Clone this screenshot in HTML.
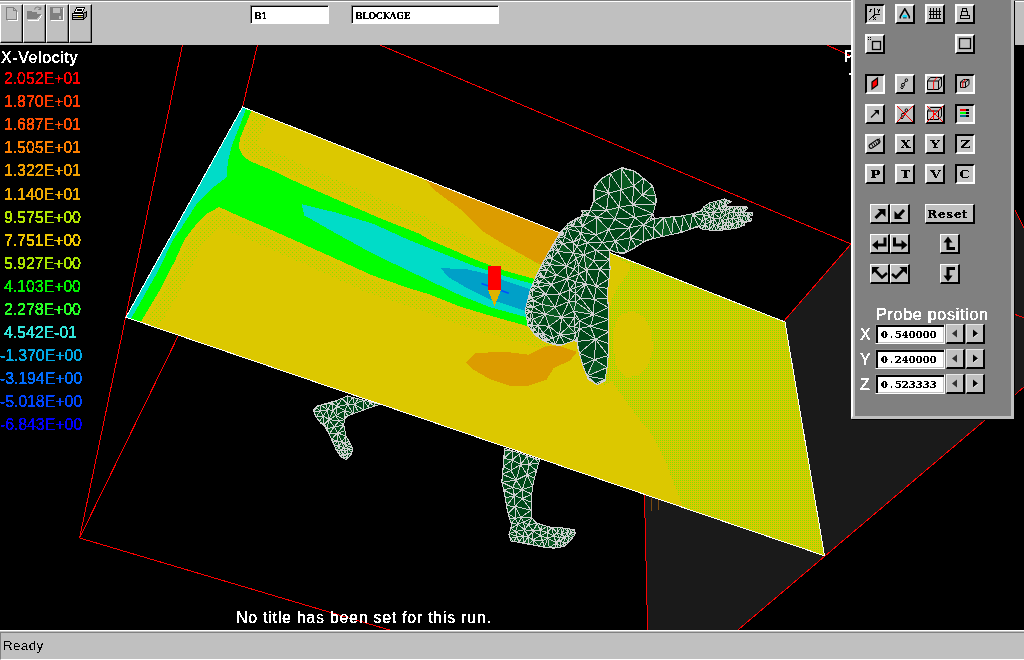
<!DOCTYPE html>
<html lang="en">
<head>
<meta charset="utf-8">
<title>X-Velocity viewer</title>
<style>
*{box-sizing:border-box;margin:0;padding:0}
html,body{width:1024px;height:660px;overflow:hidden;background:#000;font-family:"Liberation Sans",sans-serif}
#app{position:relative;width:1024px;height:660px;overflow:hidden;background:#000}
.scene{position:absolute;left:0;top:0}
.g{display:inline-block;will-change:transform;filter:url(#thr)}
#toolbar{position:absolute;left:0;top:0;width:1024px;height:45px;background:#c0c0c0;border-top:1px solid #808080}
#toolbar:before{content:"";position:absolute;left:0;top:0;width:1024px;height:1px;background:#fff}
.tbtn{position:absolute;top:3px;width:23px;height:39px;background:#c0c0c0;border-left:1px solid #fff;border-top:1px solid #fff;border-right:1px solid #000;border-bottom:1px solid #000;box-shadow:inset -1px -1px 0 #808080}
.tbtn svg{position:absolute;left:-1px;top:-2px}
.tfield{position:absolute;top:4px;height:19px;background:#fff;border-top:1px solid #808080;border-left:1px solid #808080;border-right:1px solid #fff;border-bottom:1px solid #fff;box-shadow:inset 1px 1px 0 #000;font:bold 10px "DejaVu Serif","Liberation Serif",serif;font-stretch:condensed;letter-spacing:-0.35px;-webkit-text-stroke:0.2px #000;color:#000;line-height:19.5px;padding-left:3px;white-space:nowrap}
.leg{position:absolute;left:0;white-space:nowrap;font-size:16px;line-height:18px;letter-spacing:0;-webkit-text-stroke:0.3px currentColor}
#overlay{position:absolute;left:0;top:0;width:1024px;height:660px;will-change:transform;filter:url(#thr)}
#status{position:absolute;left:0;top:630px;width:1024px;height:30px;background:#c0c0c0;border-top:1px solid #fff}
#status .inner{position:absolute;left:0;top:1px;width:1024px;height:28px;border-top:1px solid #808080;border-left:1px solid #808080;border-bottom:1px solid #fff;font-size:13.5px;letter-spacing:0.3px;line-height:26px;padding-left:2px;color:#000}
#panel{position:absolute;left:851px;top:0;width:163px;height:419px;background:#808080;border-left:2px solid #fff;border-right:3px solid #c0c0c0;border-bottom:3px solid #c0c0c0;box-shadow:inset 2px 0 0 #c0c0c0,1px 1px 0 #000}
.pb{position:absolute;width:20px;height:20px;background:#c0c0c0;border:2px solid;border-color:#fff #000 #000 #fff}
.pb.in{border-color:#000 #fff #fff #000}
.pb svg{position:absolute;left:0;top:0;width:16px;height:16px;overflow:visible}
.pb b{position:absolute;left:-2px;top:0;width:20px;height:16px;text-align:center;font:bold 11.5px "DejaVu Serif","Liberation Serif",serif;line-height:16px;color:#000}
.pb b .g{transform:scaleX(1.18)}
.rs .g{transform:scaleX(1.1)}
.sb{position:absolute;width:20px;height:20px;background:#c0c0c0;border:solid;border-width:1px 2px 2px 1px;border-color:#fff #000 #000 #fff}
.sb svg{position:absolute;left:0;top:0;width:18px;height:18px;overflow:visible}
.ab{position:absolute;width:19px;height:20px;background:#c0c0c0;border:solid;border-width:1px 2px 2px 1px;border-color:#e8e8e8 #000 #000 #e8e8e8}
.ab svg{position:absolute;left:0;top:0;width:16px;height:17px;overflow:visible}
.rs{font:bold 11px "DejaVu Serif","Liberation Serif",serif;letter-spacing:0.6px;-webkit-text-stroke:0.2px #000;padding-right:3px;line-height:19px;text-align:center;color:#000}
.ptxt{position:absolute;color:#fff;font-size:16px;line-height:18px;white-space:nowrap;will-change:transform;-webkit-text-stroke:0.3px #fff;filter:url(#thr)}
.pf{position:absolute;width:70px;height:20px;background:#fff;border:1px solid;border-color:#909090 #fff #fff #909090;box-shadow:inset 2px 2px 0 #000,inset -1px -1px 0 #c0c0c0;font:bold 10px "DejaVu Serif","Liberation Serif",serif;line-height:20px;padding-left:5px;color:#000;white-space:nowrap;-webkit-text-stroke:0.2px #000}
.pf i{display:inline-block;width:6.9px;text-align:center;font-style:normal}
</style>
</head>
<body>
<div id="app">
<svg width="0" height="0" style="position:absolute"><defs><filter id="thr" x="0" y="0" width="100%" height="100%" color-interpolation-filters="sRGB"><feComponentTransfer><feFuncA type="discrete" tableValues="0 1"/></feComponentTransfer></filter></defs></svg>
<svg class="scene" width="1024" height="660" viewBox="0 0 1024 660" shape-rendering="crispEdges">
<rect x="0" y="0" width="1024" height="660" fill="#000"/>
<polygon points="784.0,321.0 851.0,244.0 1000.0,180.0 1014.0,209.0 1024.0,228.0 1024.0,387.0 737.9,630.0 647.6,630.0 644.5,495.5 700.0,400.0" fill="#1a1a1a"/>
<g stroke="#ff0000" stroke-width="1" fill="none">
<line x1="182.5" y1="45" x2="79.6" y2="538"/>
<line x1="257.5" y1="45" x2="242.5" y2="107"/>
<line x1="79.6" y1="538" x2="203" y2="285"/>
<line x1="79.6" y1="538" x2="389.6" y2="630"/>
<line x1="380" y1="45" x2="851" y2="244"/>
<line x1="851" y1="244" x2="784" y2="321"/>
<line x1="827" y1="45" x2="851" y2="56.2"/>
<line x1="1014.5" y1="209" x2="1024" y2="228"/>
<line x1="1000" y1="309.1" x2="1024" y2="317.7"/>
<line x1="737.9" y1="630" x2="1024" y2="387"/>
<line x1="644.5" y1="495.5" x2="647.6" y2="630"/>
</g>
<path d="M651.5 498V511M658.5 500V510" stroke="#7a4a10" stroke-width="1"/>
<polygon points="347.5,396.0 379.7,404.3 366.9,408.8 354.0,413.4 345.0,417.2 343.7,425.0 346.2,436.5 350.0,443.0 352.7,448.0 351.4,454.6 346.2,459.7 341.0,457.0 336.0,449.4 330.8,437.8 325.6,426.0 320.5,423.0 314.7,414.6 313.4,409.5 317.9,405.6 330.8,403.0 338.5,399.8" fill="#004818" stroke="#d8d8d8" stroke-width="1"/>
<path d="M335.8 415.7L328.9 419.6L333.0 410.3ZM336.8 400.5L331.7 402.6L326.2 403.9ZM334.3 426.7L329.2 434.2L326.9 429.1ZM358.3 398.8L363.8 400.2L354.3 404.1ZM337.0 450.9L335.4 448.1L339.4 445.6ZM343.6 454.4L344.9 451.2L346.9 454.0ZM358.3 398.8L369.2 401.6L363.8 400.2ZM374.6 403.0L369.2 401.6L347.5 396.0Z" fill="#0a5a22"/>
<path d="M347.5 396.0L352.9 397.4M347.5 396.0L369.2 401.6M347.5 396.0L374.6 403.0M347.5 396.0L347.2 396.1M347.5 396.0L347.7 404.5M352.9 397.4L358.3 398.8M352.9 397.4L369.2 401.6M352.9 397.4L354.3 404.1M352.9 397.4L347.7 404.5M358.3 398.8L363.8 400.2M358.3 398.8L369.2 401.6M358.3 398.8L354.3 404.1M363.8 400.2L369.2 401.6M363.8 400.2L368.8 408.1M363.8 400.2L363.5 410.0M363.8 400.2L354.3 404.1M369.2 401.6L374.6 403.0M369.2 401.6L374.1 406.3M369.2 401.6L368.8 408.1M374.6 403.0L379.4 404.4M374.6 403.0L374.1 406.3M379.4 404.4L374.1 406.3M374.1 406.3L368.8 408.1M368.8 408.1L363.5 410.0M363.5 410.0L358.3 411.9M363.5 410.0L354.3 404.1M358.3 411.9L353.0 413.8M358.3 411.9L354.3 404.1M353.0 413.8L347.8 416.0M353.0 413.8L354.3 404.1M353.0 413.8L344.7 410.4M353.0 413.8L347.7 404.5M347.8 416.0L344.6 419.7M347.8 416.0L344.7 410.4M344.6 419.7L343.7 425.2M344.6 419.7L335.8 415.7M344.6 419.7L344.7 410.4M344.6 419.7L339.0 421.0M343.7 425.2L344.9 430.7M343.7 425.2L334.3 426.7M343.7 425.2L337.7 432.9M343.7 425.2L339.0 421.0M344.9 430.7L346.1 436.1M344.9 430.7L337.7 432.9M346.1 436.1L348.8 441.0M346.1 436.1L337.7 432.9M346.1 436.1L345.8 442.5M346.1 436.1L341.7 441.7M348.8 441.0L350.4 443.8M348.8 441.0L345.8 442.5M350.4 443.8L352.0 446.6M350.4 443.8L345.8 442.5M350.4 443.8L346.4 445.8M352.0 446.6L352.4 449.6M352.0 446.6L348.0 449.4M352.0 446.6L346.4 445.8M352.4 449.6L351.8 452.7M352.4 449.6L348.0 449.4M351.8 452.7L350.5 455.5M351.8 452.7L346.9 454.0M351.8 452.7L348.0 449.4M350.5 455.5L348.2 457.8M350.5 455.5L346.9 454.0M348.2 457.8L345.8 459.5M348.2 457.8L343.0 458.0M348.2 457.8L343.6 454.4M348.2 457.8L346.9 454.0M345.8 459.5L343.0 458.0M343.0 458.0L340.5 456.2M343.0 458.0L343.6 454.4M340.5 456.2L338.7 453.5M340.5 456.2L343.6 454.4M338.7 453.5L337.0 450.9M338.7 453.5L343.6 454.4M338.7 453.5L340.4 450.5M337.0 450.9L335.4 448.1M337.0 450.9L339.4 445.6M337.0 450.9L340.4 450.5M335.4 448.1L334.1 445.1M335.4 448.1L339.4 445.6M334.1 445.1L332.8 442.2M334.1 445.1L337.5 440.9M334.1 445.1L339.4 445.6M332.8 442.2L331.5 439.3M332.8 442.2L337.5 440.9M331.5 439.3L329.2 434.2M331.5 439.3L337.7 432.9M331.5 439.3L337.5 440.9M329.2 434.2L326.9 429.1M329.2 434.2L323.7 424.9M329.2 434.2L334.3 426.7M329.2 434.2L337.7 432.9M326.9 429.1L323.7 424.9M326.9 429.1L334.3 426.7M326.9 429.1L328.9 419.6M323.7 424.9L319.4 421.4M323.7 424.9L328.9 419.6M323.7 424.9L323.3 416.0M319.4 421.4L316.2 416.8M319.4 421.4L323.3 416.0M316.2 416.8L314.0 411.8M316.2 416.8L323.3 416.0M316.2 416.8L320.3 411.2M314.0 411.8L315.9 407.4M314.0 411.8L320.3 411.2M315.9 407.4L320.8 405.0M315.9 407.4L320.3 411.2M320.8 405.0L326.2 403.9M320.8 405.0L336.8 400.5M320.8 405.0L327.3 409.7M320.8 405.0L320.3 411.2M326.2 403.9L331.7 402.6M326.2 403.9L336.8 400.5M326.2 403.9L327.3 409.7M331.7 402.6L336.8 400.5M331.7 402.6L327.3 409.7M331.7 402.6L337.3 406.6M331.7 402.6L333.0 410.3M336.8 400.5L342.0 398.3M336.8 400.5L337.3 406.6M342.0 398.3L347.2 396.1M342.0 398.3L337.3 406.6M342.0 398.3L347.7 404.5M347.2 396.1L347.7 404.5M354.3 404.1L347.7 404.5M327.3 409.7L328.9 419.6M327.3 409.7L323.3 416.0M327.3 409.7L320.3 411.2M327.3 409.7L333.0 410.3M337.3 406.6L335.8 415.7M337.3 406.6L344.7 410.4M337.3 406.6L347.7 404.5M337.3 406.6L333.0 410.3M335.8 415.7L344.7 410.4M335.8 415.7L339.0 421.0M335.8 415.7L328.9 419.6M335.8 415.7L333.0 410.3M334.3 426.7L337.7 432.9M334.3 426.7L339.0 421.0M334.3 426.7L328.9 419.6M337.7 432.9L337.5 440.9M337.7 432.9L341.7 441.7M345.8 442.5L341.7 441.7M345.8 442.5L346.4 445.8M337.5 440.9L339.4 445.6M337.5 440.9L341.7 441.7M344.1 448.0L339.4 445.6M344.1 448.0L348.0 449.4M344.1 448.0L344.9 451.2M344.1 448.0L341.7 441.7M344.1 448.0L340.4 450.5M344.1 448.0L346.4 445.8M344.7 410.4L347.7 404.5M343.6 454.4L346.9 454.0M343.6 454.4L344.9 451.2M343.6 454.4L340.4 450.5M339.0 421.0L328.9 419.6M346.9 454.0L348.0 449.4M346.9 454.0L344.9 451.2M328.9 419.6L323.3 416.0M328.9 419.6L333.0 410.3M339.4 445.6L341.7 441.7M339.4 445.6L340.4 450.5M348.0 449.4L344.9 451.2M348.0 449.4L346.4 445.8M323.3 416.0L320.3 411.2M344.9 451.2L340.4 450.5M341.7 441.7L346.4 445.8" stroke="#d0d0d0" stroke-width="1" fill="none"/>
<polygon points="504.5,448.2 539.5,460.0 536.4,471.0 532.7,485.5 531.0,501.8 531.0,516.4 535.5,522.7 550.0,527.3 566.4,528.2 574.5,530.0 575.5,533.6 571.0,540.0 564.5,546.4 553.6,548.2 544.5,547.3 526.4,543.6 511.0,541.0 509.0,534.5 511.8,525.5 507.3,511.0 505.5,498.0 501.8,481.8 503.6,463.6" fill="#004818" stroke="#d8d8d8" stroke-width="1"/>
<path d="M527.2 455.9L528.9 464.5L520.6 464.5ZM503.9 458.4L512.4 460.0L503.3 466.4ZM512.1 450.8L503.9 458.4L504.4 450.4ZM527.1 474.7L534.5 478.4L532.6 486.2ZM572.8 537.4L570.2 533.6L574.7 534.8ZM506.6 505.8L505.5 497.9L514.5 495.5ZM547.8 538.2L556.6 542.7L549.3 547.8ZM506.6 505.8L503.7 490.1L505.5 497.9ZM522.3 489.7L512.6 487.5L516.2 480.1ZM528.9 544.1L523.8 543.2L528.2 536.6ZM540.3 530.5L533.1 530.9L537.3 523.3ZM542.6 540.9L540.5 535.7L547.8 538.2ZM524.5 529.8L523.7 522.1L528.4 524.7ZM568.7 542.3L568.0 536.6L571.0 540.0ZM568.0 536.6L570.2 533.6L572.8 537.4ZM532.8 540.0L528.9 544.1L528.2 536.6ZM515.1 518.3L511.2 523.6L509.7 518.6Z" fill="#0a5a22"/>
<path d="M504.5 448.2L512.1 450.8M504.5 448.2L534.8 458.4M504.5 448.2L501.9 482.3M504.5 448.2L502.5 474.3M504.5 448.2L504.4 450.4M512.1 450.8L519.7 453.3M512.1 450.8L534.8 458.4M512.1 450.8L503.9 458.4M512.1 450.8L504.4 450.4M512.1 450.8L512.4 460.0M519.7 453.3L527.2 455.9M519.7 453.3L534.8 458.4M519.7 453.3L512.4 460.0M519.7 453.3L520.6 464.5M527.2 455.9L534.8 458.4M527.2 455.9L520.6 464.5M527.2 455.9L528.9 464.5M534.8 458.4L538.7 462.9M534.8 458.4L528.9 464.5M538.7 462.9L536.5 470.6M538.7 462.9L528.9 464.5M536.5 470.6L534.5 478.4M536.5 470.6L527.1 474.7M536.5 470.6L528.9 464.5M534.5 478.4L532.6 486.2M534.5 478.4L527.1 474.7M532.6 486.2L531.8 494.1M532.6 486.2L522.3 489.7M532.6 486.2L527.1 474.7M531.8 494.1L531.0 502.1M531.8 494.1L522.3 489.7M531.8 494.1L522.2 498.5M531.0 502.1L531.0 510.1M531.0 502.1L522.2 498.5M531.0 510.1L532.0 517.8M531.0 510.1L515.1 506.4M531.0 510.1L520.9 517.5M531.0 510.1L522.2 498.5M532.0 517.8L537.3 523.3M532.0 517.8L520.9 517.5M532.0 517.8L523.7 522.1M532.0 517.8L528.4 524.7M537.3 523.3L542.3 524.9M537.3 523.3L533.1 530.9M537.3 523.3L528.4 524.7M537.3 523.3L540.3 530.5M542.3 524.9L547.3 526.4M542.3 524.9L540.3 530.5M547.3 526.4L552.3 527.4M547.3 526.4L540.3 530.5M547.3 526.4L547.1 532.2M552.3 527.4L557.5 527.7M552.3 527.4L553.3 535.9M552.3 527.4L556.9 532.9M552.3 527.4L547.1 532.2M557.5 527.7L560.7 527.9M557.5 527.7L556.9 532.9M560.7 527.9L563.9 528.1M560.7 527.9L562.2 534.6M560.7 527.9L556.9 532.9M563.9 528.1L567.1 528.4M563.9 528.1L562.2 534.6M563.9 528.1L567.6 531.8M567.1 528.4L570.2 529.0M567.1 528.4L567.6 531.8M570.2 529.0L573.3 529.7M570.2 529.0L570.2 533.6M570.2 529.0L567.6 531.8M573.3 529.7L575.0 531.9M573.3 529.7L570.2 533.6M575.0 531.9L574.7 534.8M575.0 531.9L570.2 533.6M574.7 534.8L572.8 537.4M574.7 534.8L570.2 533.6M572.8 537.4L571.0 540.0M572.8 537.4L568.0 536.6M572.8 537.4L570.2 533.6M571.0 540.0L568.7 542.3M571.0 540.0L568.0 536.6M568.7 542.3L566.4 544.5M568.7 542.3L563.7 542.7M568.7 542.3L568.0 536.6M568.7 542.3L564.6 537.3M566.4 544.5L564.0 546.5M566.4 544.5L563.7 542.7M564.0 546.5L560.8 547.0M564.0 546.5L563.7 542.7M560.8 547.0L557.7 547.5M560.8 547.0L563.7 542.7M560.8 547.0L559.9 541.3M560.8 547.0L556.6 542.7M557.7 547.5L554.5 548.0M557.7 547.5L556.6 542.7M554.5 548.0L549.3 547.8M554.5 548.0L556.6 542.7M549.3 547.8L544.2 547.2M549.3 547.8L547.8 538.2M549.3 547.8L556.6 542.7M544.2 547.2L539.1 546.2M544.2 547.2L513.5 541.4M544.2 547.2L547.8 538.2M544.2 547.2L542.6 540.9M539.1 546.2L534.0 545.2M539.1 546.2L518.7 542.3M539.1 546.2L513.5 541.4M539.1 546.2L532.8 540.0M539.1 546.2L542.6 540.9M534.0 545.2L528.9 544.1M534.0 545.2L523.8 543.2M534.0 545.2L518.7 542.3M534.0 545.2L532.8 540.0M528.9 544.1L523.8 543.2M528.9 544.1L528.2 536.6M528.9 544.1L532.8 540.0M523.8 543.2L518.7 542.3M523.8 543.2L528.2 536.6M523.8 543.2L523.0 536.3M518.7 542.3L513.5 541.4M518.7 542.3L517.3 536.6M518.7 542.3L523.0 536.3M513.5 541.4L510.2 538.5M513.5 541.4L517.3 536.6M510.2 538.5L509.3 533.5M510.2 538.5L517.3 536.6M509.3 533.5L510.9 528.5M509.3 533.5L515.5 531.4M509.3 533.5L517.3 536.6M510.9 528.5L511.2 523.6M510.9 528.5L518.1 524.2M510.9 528.5L515.5 531.4M511.2 523.6L509.7 518.6M511.2 523.6L518.1 524.2M511.2 523.6L515.1 518.3M509.7 518.6L508.1 513.6M509.7 518.6L515.1 518.3M508.1 513.6L506.6 505.8M508.1 513.6L515.1 506.4M508.1 513.6L515.1 518.3M506.6 505.8L505.5 497.9M506.6 505.8L503.7 490.1M506.6 505.8L515.1 506.4M506.6 505.8L514.5 495.5M505.5 497.9L503.7 490.1M505.5 497.9L514.5 495.5M503.7 490.1L501.9 482.3M503.7 490.1L514.5 495.5M503.7 490.1L512.6 487.5M501.9 482.3L502.5 474.3M501.9 482.3L516.2 480.1M501.9 482.3L512.6 487.5M502.5 474.3L503.3 466.4M502.5 474.3L503.9 458.4M502.5 474.3L504.4 450.4M502.5 474.3L510.9 470.5M502.5 474.3L516.2 480.1M503.3 466.4L503.9 458.4M503.3 466.4L510.9 470.5M503.3 466.4L512.4 460.0M503.9 458.4L504.4 450.4M503.9 458.4L512.4 460.0M533.1 530.9L524.5 529.8M533.1 530.9L540.5 535.7M533.1 530.9L528.2 536.6M533.1 530.9L532.8 540.0M533.1 530.9L528.4 524.7M533.1 530.9L540.3 530.5M510.9 470.5L512.4 460.0M510.9 470.5L516.2 480.1M510.9 470.5L520.6 464.5M512.4 460.0L520.6 464.5M524.5 529.8L528.2 536.6M524.5 529.8L523.7 522.1M524.5 529.8L518.1 524.2M524.5 529.8L528.4 524.7M524.5 529.8L515.5 531.4M524.5 529.8L523.0 536.3M515.1 506.4L520.9 517.5M515.1 506.4L514.5 495.5M515.1 506.4L515.1 518.3M515.1 506.4L522.2 498.5M540.5 535.7L547.8 538.2M540.5 535.7L532.8 540.0M540.5 535.7L542.6 540.9M540.5 535.7L540.3 530.5M540.5 535.7L547.1 532.2M563.7 542.7L559.9 541.3M563.7 542.7L564.6 537.3M562.2 534.6L559.6 537.9M562.2 534.6L556.9 532.9M562.2 534.6L564.6 537.3M562.2 534.6L567.6 531.8M522.3 489.7L527.1 474.7M522.3 489.7L514.5 495.5M522.3 489.7L516.2 480.1M522.3 489.7L512.6 487.5M522.3 489.7L522.2 498.5M528.2 536.6L532.8 540.0M528.2 536.6L523.0 536.3M527.1 474.7L516.2 480.1M527.1 474.7L520.6 464.5M527.1 474.7L528.9 464.5M520.9 517.5L523.7 522.1M520.9 517.5L518.1 524.2M520.9 517.5L515.1 518.3M547.8 538.2L553.3 535.9M547.8 538.2L542.6 540.9M547.8 538.2L556.6 542.7M547.8 538.2L547.1 532.2M532.8 540.0L542.6 540.9M514.5 495.5L512.6 487.5M514.5 495.5L522.2 498.5M553.3 535.9L559.6 537.9M553.3 535.9L556.9 532.9M553.3 535.9L556.6 542.7M553.3 535.9L547.1 532.2M559.6 537.9L556.9 532.9M559.6 537.9L559.9 541.3M559.6 537.9L556.6 542.7M559.6 537.9L564.6 537.3M516.2 480.1L520.6 464.5M516.2 480.1L512.6 487.5M520.6 464.5L528.9 464.5M523.7 522.1L518.1 524.2M523.7 522.1L528.4 524.7M518.1 524.2L515.1 518.3M518.1 524.2L515.5 531.4M568.0 536.6L570.2 533.6M568.0 536.6L564.6 537.3M568.0 536.6L567.6 531.8M559.9 541.3L556.6 542.7M559.9 541.3L564.6 537.3M570.2 533.6L567.6 531.8M515.5 531.4L517.3 536.6M515.5 531.4L523.0 536.3M540.3 530.5L547.1 532.2M517.3 536.6L523.0 536.3M564.6 537.3L567.6 531.8" stroke="#d0d0d0" stroke-width="1" fill="none"/>
<defs><clipPath id="pc"><polygon points="242.5,107.0 785.0,322.0 824.5,555.8 125.9,317.3"/></clipPath>
<pattern id="dith2" width="2" height="2" patternUnits="userSpaceOnUse"><rect width="2" height="2" fill="#dcc800"/><rect x="0" y="0" width="1" height="1" fill="#82e000"/></pattern>
<pattern id="dith" width="2" height="2" patternUnits="userSpaceOnUse"><rect width="2" height="2" fill="#dcc800"/><rect width="1" height="1" fill="#b4e000"/><rect x="1" y="1" width="1" height="1" fill="#b4e000"/></pattern>
<pattern id="dots" width="4" height="4" patternUnits="userSpaceOnUse"><rect x="0" y="0" width="1" height="1" fill="#82e000"/><rect x="2" y="2" width="1" height="1" fill="#a0d800"/></pattern>
</defs>
<g clip-path="url(#pc)">
<polygon points="242.5,107.0 785.0,322.0 824.5,555.8 125.9,317.3" fill="#dcc800"/>
<polygon points="605.0,250.0 785.0,322.0 824.5,555.8 683.0,507.5 665.0,460.0 650.8,433.0 640.0,420.0 625.0,400.0 612.0,381.0 605.0,385.0 600.0,383.0 600.0,260.0" fill="url(#dith2)"/>
<polygon points="622.0,314.0 634.0,311.0 645.0,318.0 652.0,333.0 653.0,350.0 648.0,365.0 638.0,376.0 626.0,377.0 617.0,368.0 614.0,350.0 614.0,330.0 617.0,320.0" fill="#dcc800"/>
<polygon points="604.0,250.0 631.0,265.4 626.0,276.0 617.0,288.0 611.0,302.0 608.5,318.0 600.0,318.0" fill="#dcc800"/>
<polygon points="425.5,180.0 435.5,191.0 460.0,209.0 481.0,230.0 496.7,240.0 514.8,250.6 539.0,264.0 560.0,272.0 600.0,265.0 600.0,249.0" fill="#dc9c00"/>
<polygon points="466.0,362.0 476.0,353.0 505.5,351.8 529.0,354.7 546.5,346.0 559.7,346.0 577.0,351.8 570.0,360.6 553.8,368.0 546.5,379.6 529.0,385.5 511.0,386.0 490.8,379.6 473.0,369.4" fill="#dc9c00"/>
<polygon points="251.4,110.8 246.3,123.2 239.8,138.7 239.0,147.7 242.4,155.4 248.9,160.6 274.6,171.5 300.0,183.6 340.0,200.9 380.0,218.2 420.0,234.0 430.0,240.0 475.5,259.7 505.8,271.0 533.0,278.6 545.0,282.0 540.0,330.0 528.5,326.4 490.6,315.8 460.3,306.7 430.0,294.5 409.0,288.2 372.7,275.5 336.4,259.0 300.0,242.7 274.6,231.4 236.0,214.7 219.2,207.0 207.6,213.4 194.7,226.3 184.2,240.0 175.4,259.8 160.0,290.0 141.0,321.5 125.9,317.3 242.5,107.0" fill="none" stroke="url(#dots)" stroke-width="36" stroke-linejoin="round"/>
<polygon points="251.4,110.8 246.3,123.2 239.8,138.7 239.0,147.7 242.4,155.4 248.9,160.6 274.6,171.5 300.0,183.6 340.0,200.9 380.0,218.2 420.0,234.0 430.0,240.0 475.5,259.7 505.8,271.0 533.0,278.6 545.0,282.0 540.0,330.0 528.5,326.4 490.6,315.8 460.3,306.7 430.0,294.5 409.0,288.2 372.7,275.5 336.4,259.0 300.0,242.7 274.6,231.4 236.0,214.7 219.2,207.0 207.6,213.4 194.7,226.3 184.2,240.0 175.4,259.8 160.0,290.0 141.0,321.5 125.9,317.3 242.5,107.0" fill="none" stroke="#dcc800" stroke-width="8" stroke-linejoin="round"/>
<polygon points="251.4,110.8 246.3,123.2 239.8,138.7 239.0,147.7 242.4,155.4 248.9,160.6 274.6,171.5 300.0,183.6 340.0,200.9 380.0,218.2 420.0,234.0 430.0,240.0 475.5,259.7 505.8,271.0 533.0,278.6 545.0,282.0 540.0,330.0 528.5,326.4 490.6,315.8 460.3,306.7 430.0,294.5 409.0,288.2 372.7,275.5 336.4,259.0 300.0,242.7 274.6,231.4 236.0,214.7 219.2,207.0 207.6,213.4 194.7,226.3 184.2,240.0 175.4,259.8 160.0,290.0 141.0,321.5 125.9,317.3 242.5,107.0" fill="#00ff00"/>
<polygon points="242.5,107.0 246.0,109.0 240.0,125.0 232.0,145.0 227.7,162.0 227.0,177.0 212.8,187.6 197.3,203.0 180.6,229.0 172.9,240.0 158.7,270.0 131.2,318.5 125.9,317.3" fill="#00dcc8"/>
<polygon points="301.5,204.2 336.4,212.7 372.7,223.6 409.0,240.0 430.0,248.5 475.5,266.5 505.8,276.4 530.0,283.2 545.0,288.0 540.0,321.0 524.0,316.5 490.6,307.4 460.3,295.3 430.0,281.0 409.0,270.9 372.7,253.6 336.4,233.6 304.5,215.5" fill="#00dcc8"/>
<polygon points="441.0,268.0 467.9,269.5 487.6,274.0 505.8,281.0 528.5,288.5 545.0,294.0 540.0,316.0 525.5,311.0 505.8,304.4 490.6,299.8 467.9,288.5 448.0,277.0" fill="#00a0c8"/>
</g>
<polygon points="242.5,107.0 785.0,322.0 824.5,555.8 125.9,317.3" fill="none" stroke="#ffffff" stroke-width="1"/>
<line x1="481.5" y1="283.6" x2="508.8" y2="293.3" stroke="#0050ff" stroke-width="1.6" shape-rendering="geometricPrecision"/>
<rect x="488" y="266" width="13" height="24" fill="#ff0000"/>
<polygon points="488,290 501,290 494.5,306" fill="#dcb400"/>
<polygon points="622.5,167.5 635.8,171.7 652.5,185.8 656.7,200.0 653.3,212.5 650.8,219.0 663.0,217.5 680.0,216.4 696.4,212.7 700.9,211.4 703.6,206.8 710.0,202.7 719.0,200.5 724.5,199.0 731.8,201.8 725.5,204.5 722.0,206.5 734.5,206.0 745.5,206.0 747.7,208.2 745.5,210.5 741.0,211.4 743.6,212.0 752.3,212.5 752.7,215.0 748.0,216.6 751.8,219.0 751.0,221.0 745.5,221.4 744.5,225.0 738.0,227.7 729.0,229.5 716.4,230.5 702.7,229.5 698.0,226.0 681.8,232.3 646.7,240.0 634.0,248.3 623.3,254.0 616.7,252.5 610.0,250.0 609.0,253.3 610.2,268.8 607.7,289.3 608.2,310.0 609.0,338.0 607.7,364.0 605.0,380.7 597.4,384.6 588.4,379.4 583.2,366.6 578.0,348.5 576.8,339.5 570.3,342.0 558.8,346.0 545.9,342.0 535.6,335.7 527.9,325.4 525.3,310.0 530.4,289.3 539.5,268.8 551.0,248.0 560.0,232.7 568.3,223.3 576.7,218.3 583.0,215.8 581.7,210.8 590.0,210.0 591.7,206.7 594.0,200.0 594.0,185.8 601.7,178.3 615.0,170.8" fill="#004818" stroke="#d0d0d0" stroke-width="1"/>
<path d="M594.5 359.6L607.1 367.5L587.0 376.0ZM655.3 195.2L642.1 194.9L652.6 186.0ZM562.6 243.4L573.2 253.1L557.8 251.4ZM664.2 217.4L673.8 216.8L671.7 234.5ZM662.3 236.6L664.2 217.4L671.7 234.5ZM664.2 217.4L662.3 236.6L653.6 228.2ZM575.4 333.7L559.6 334.7L568.7 326.4ZM550.3 264.7L551.8 258.8L566.5 266.1ZM619.4 207.3L614.9 219.2L606.6 210.1ZM538.1 325.6L533.3 319.1L545.0 314.3ZM555.1 307.3L561.6 317.4L545.0 314.3ZM706.2 205.1L710.0 208.6L703.3 207.3ZM575.9 302.0L573.8 311.2L568.8 301.6ZM573.8 311.2L575.9 302.0L593.8 314.7ZM633.4 185.9L621.1 190.0L621.0 168.2ZM593.6 261.0L586.5 270.2L583.7 254.7ZM608.4 229.5L596.1 235.0L597.0 217.4ZM576.6 258.3L573.2 253.1L583.7 254.7ZM728.1 229.6L728.2 226.4L730.8 229.1ZM534.5 286.7L539.3 282.1L538.4 287.0ZM532.5 284.7L534.5 286.7L531.5 286.7ZM541.9 304.2L555.1 307.3L545.0 314.3ZM555.1 307.3L541.9 304.2L545.8 294.0ZM713.2 212.7L714.2 207.8L719.2 208.3ZM541.9 264.4L543.9 265.8L540.9 266.3ZM550.3 264.7L543.9 265.8L543.0 262.4ZM551.8 258.8L545.2 258.5L546.3 256.5ZM544.1 260.5L545.2 258.5L550.3 264.7ZM550.6 248.7L553.8 249.3L549.5 250.7ZM718.2 225.8L722.1 226.5L720.0 230.2ZM745.0 223.1L741.6 220.7L746.4 221.3ZM561.6 317.4L549.2 326.2L545.0 314.3ZM550.3 264.7L556.3 275.3L546.9 270.0ZM710.6 216.5L713.2 212.7L714.0 219.0ZM710.6 216.5L705.3 219.2L703.6 214.9ZM562.2 235.3L557.4 237.1L558.5 235.2ZM741.6 220.7L739.6 216.0L744.1 214.8ZM728.6 200.6L727.5 203.6L726.0 199.6ZM728.2 226.4L728.9 222.1L732.4 224.0ZM525.7 308.3L533.1 306.8L531.5 311.7ZM730.0 202.6L727.5 203.6L728.6 200.6ZM539.8 268.3L550.6 248.7L540.9 266.3ZM536.1 276.5L530.6 288.8L537.0 274.4ZM530.6 288.8L537.9 272.4L537.0 274.4Z" fill="#0a5a22"/>
<path d="M622.5 167.5L633.9 171.1M622.5 167.5L621.0 168.2M633.9 171.1L643.5 178.2M633.9 171.1L621.0 168.2M633.9 171.1L633.4 185.9M643.5 178.2L652.6 186.0M643.5 178.2L642.1 194.9M643.5 178.2L633.4 185.9M652.6 186.0L655.3 195.2M652.6 186.0L642.1 194.9M655.3 195.2L655.5 204.4M655.3 195.2L642.1 194.9M655.5 204.4L652.9 213.7M655.5 204.4L632.7 204.8M655.5 204.4L642.1 194.9M652.9 213.7L654.6 218.5M652.9 213.7L634.7 217.5M652.9 213.7L643.5 224.7M652.9 213.7L632.7 204.8M654.6 218.5L664.2 217.4M654.6 218.5L643.5 224.7M654.6 218.5L653.6 228.2M664.2 217.4L673.8 216.8M664.2 217.4L671.7 234.5M664.2 217.4L662.3 236.6M664.2 217.4L653.6 228.2M673.8 216.8L683.3 215.7M673.8 216.8L681.1 232.5M673.8 216.8L671.7 234.5M683.3 215.7L692.6 213.6M683.3 215.7L690.1 229.1M683.3 215.7L681.1 232.5M692.6 213.6L701.4 210.5M692.6 213.6L698.9 226.7M692.6 213.6L690.1 229.1M692.6 213.6L702.1 221.1M692.6 213.6L703.6 214.9M701.4 210.5L703.3 207.3M701.4 210.5L707.1 212.4M701.4 210.5L703.6 214.9M703.3 207.3L706.2 205.1M703.3 207.3L707.1 212.4M703.3 207.3L710.0 208.6M706.2 205.1L709.3 203.2M706.2 205.1L710.0 208.6M709.3 203.2L712.8 202.0M709.3 203.2L714.2 207.8M709.3 203.2L710.0 208.6M712.8 202.0L716.3 201.2M712.8 202.0L714.2 207.8M716.3 201.2L719.9 200.3M716.3 201.2L714.2 207.8M716.3 201.2L719.2 208.3M719.9 200.3L723.4 199.3M719.9 200.3L725.0 204.8M719.9 200.3L722.7 206.1M719.9 200.3L719.2 208.3M723.4 199.3L726.0 199.6M723.4 199.3L725.0 204.8M726.0 199.6L728.6 200.6M726.0 199.6L727.5 203.6M726.0 199.6L725.0 204.8M728.6 200.6L731.1 201.5M728.6 200.6L730.0 202.6M728.6 200.6L727.5 203.6M731.1 201.5L730.0 202.6M730.0 202.6L727.5 203.6M727.5 203.6L725.0 204.8M725.0 204.8L722.7 206.1M725.0 204.8L724.0 206.4M725.0 204.8L726.7 206.3M722.7 206.1L724.0 206.4M722.7 206.1L723.2 209.7M722.7 206.1L719.2 208.3M724.0 206.4L726.7 206.3M724.0 206.4L723.2 209.7M724.0 206.4L726.0 210.1M726.7 206.3L729.4 206.2M726.7 206.3L729.2 209.9M726.7 206.3L726.0 210.1M729.4 206.2L732.1 206.1M729.4 206.2L729.2 209.9M732.1 206.1L734.8 206.0M732.1 206.1L733.9 211.8M732.1 206.1L729.2 209.9M734.8 206.0L737.6 206.0M734.8 206.0L733.9 211.8M737.6 206.0L740.3 206.0M737.6 206.0L741.2 211.4M737.6 206.0L733.9 211.8M737.6 206.0L738.4 212.8M740.3 206.0L743.0 206.0M740.3 206.0L741.2 211.4M743.0 206.0L745.6 206.1M743.0 206.0L745.9 210.0M743.0 206.0L743.5 210.9M743.0 206.0L741.2 211.4M745.6 206.1L747.6 208.1M745.6 206.1L745.9 210.0M747.6 208.1L745.9 210.0M745.9 210.0L743.5 210.9M745.9 210.0L743.9 212.0M743.5 210.9L741.2 211.4M743.5 210.9L743.9 212.0M741.2 211.4L743.9 212.0M741.2 211.4L738.4 212.8M741.2 211.4L744.1 214.8M741.2 211.4L739.6 216.0M743.9 212.0L746.6 212.2M743.9 212.0L744.1 214.8M746.6 212.2L749.3 212.3M746.6 212.2L748.3 216.8M746.6 212.2L744.1 214.8M749.3 212.3L752.0 212.5M749.3 212.3L750.2 215.8M749.3 212.3L748.3 216.8M752.0 212.5L752.7 214.9M752.0 212.5L750.2 215.8M752.7 214.9L750.2 215.8M750.2 215.8L748.3 216.8M748.3 216.8L750.6 218.2M748.3 216.8L749.1 221.1M748.3 216.8L746.4 221.3M748.3 216.8L744.1 214.8M750.6 218.2L751.3 220.2M750.6 218.2L749.1 221.1M751.3 220.2L749.1 221.1M749.1 221.1L746.4 221.3M749.1 221.1L745.0 223.1M746.4 221.3L745.0 223.1M746.4 221.3L741.6 220.7M746.4 221.3L744.1 214.8M745.0 223.1L743.8 225.3M745.0 223.1L741.6 220.7M743.8 225.3L741.3 226.3M743.8 225.3L741.6 220.7M741.3 226.3L738.7 227.4M741.3 226.3L737.6 222.1M741.3 226.3L741.6 220.7M738.7 227.4L736.1 228.1M738.7 227.4L737.6 222.1M736.1 228.1L733.5 228.6M736.1 228.1L737.6 222.1M736.1 228.1L732.4 224.0M733.5 228.6L730.8 229.1M733.5 228.6L732.4 224.0M730.8 229.1L728.1 229.6M730.8 229.1L732.4 224.0M730.8 229.1L728.2 226.4M728.1 229.6L725.4 229.8M728.1 229.6L728.2 226.4M725.4 229.8L722.7 230.0M725.4 229.8L722.1 226.5M725.4 229.8L725.0 225.5M725.4 229.8L728.2 226.4M722.7 230.0L720.0 230.2M722.7 230.0L722.1 226.5M720.0 230.2L716.3 230.5M720.0 230.2L722.1 226.5M720.0 230.2L718.2 225.8M716.3 230.5L712.6 230.2M716.3 230.5L718.2 225.8M716.3 230.5L713.7 223.9M712.6 230.2L709.0 230.0M712.6 230.2L713.7 223.9M709.0 230.0L705.3 229.7M709.0 230.0L705.8 224.3M709.0 230.0L713.7 223.9M709.0 230.0L710.5 221.9M705.3 229.7L701.8 228.9M705.3 229.7L705.8 224.3M701.8 228.9L698.9 226.7M701.8 228.9L705.8 224.3M698.9 226.7L690.1 229.1M698.9 226.7L702.1 221.1M698.9 226.7L705.8 224.3M690.1 229.1L681.1 232.5M681.1 232.5L671.7 234.5M671.7 234.5L662.3 236.6M662.3 236.6L653.0 238.6M662.3 236.6L653.6 228.2M653.0 238.6L644.0 241.7M653.0 238.6L643.5 224.7M653.0 238.6L653.6 228.2M644.0 241.7L636.0 247.0M644.0 241.7L643.5 224.7M644.0 241.7L630.9 237.6M636.0 247.0L627.6 251.7M636.0 247.0L630.9 237.6M627.6 251.7L618.7 253.0M627.6 251.7L615.0 240.8M627.6 251.7L630.9 237.6M618.7 253.0L609.9 250.4M618.7 253.0L615.0 240.8M609.9 250.4L609.5 259.8M609.9 250.4L596.2 250.3M609.9 250.4L615.0 240.8M609.9 250.4L602.4 242.5M609.5 259.8L610.1 269.4M609.5 259.8L596.2 250.3M609.5 259.8L599.6 268.9M609.5 259.8L593.6 261.0M610.1 269.4L609.0 278.9M610.1 269.4L599.6 268.9M609.0 278.9L607.8 288.4M609.0 278.9L599.6 268.9M609.0 278.9L596.2 286.5M607.8 288.4L607.9 298.0M607.8 288.4L596.2 286.5M607.9 298.0L608.1 307.6M607.9 298.0L596.2 286.5M607.9 298.0L594.1 299.3M608.1 307.6L608.5 319.6M608.1 307.6L593.8 314.7M608.1 307.6L594.1 299.3M608.5 319.6L608.8 331.6M608.5 319.6L593.8 314.7M608.5 319.6L590.3 326.3M608.8 331.6L608.7 343.6M608.8 331.6L595.6 339.3M608.8 331.6L590.3 326.3M608.7 343.6L608.1 355.6M608.7 343.6L595.6 339.3M608.1 355.6L607.1 367.5M608.1 355.6L594.5 359.6M608.1 355.6L595.6 339.3M607.1 367.5L605.2 379.4M607.1 367.5L587.0 376.0M607.1 367.5L594.5 359.6M605.2 379.4L595.6 383.5M605.2 379.4L587.0 376.0M595.6 383.5L587.0 376.0M587.0 376.0L582.7 364.8M587.0 376.0L594.5 359.6M582.7 364.8L579.4 353.2M582.7 364.8L594.5 359.6M579.4 353.2L577.1 341.5M579.4 353.2L594.5 359.6M579.4 353.2L595.6 339.3M577.1 341.5L573.5 340.8M577.1 341.5L595.6 339.3M577.1 341.5L575.4 333.7M577.1 341.5L579.7 328.6M573.5 340.8L564.4 344.0M573.5 340.8L575.4 333.7M573.5 340.8L559.6 334.7M564.4 344.0L555.3 344.9M564.4 344.0L559.6 334.7M555.3 344.9L546.1 342.1M555.3 344.9L559.6 334.7M555.3 344.9L547.7 339.5M555.3 344.9L552.9 338.2M546.1 342.1L544.2 341.0M546.1 342.1L547.7 339.5M546.1 342.1L545.0 338.7M544.2 341.0L542.3 339.8M544.2 341.0L545.0 338.7M542.3 339.8L540.4 338.6M542.3 339.8L545.0 338.7M542.3 339.8L542.2 336.2M540.4 338.6L538.5 337.5M540.4 338.6L542.2 336.2M538.5 337.5L536.6 336.3M538.5 337.5L538.2 333.3M538.5 337.5L542.2 336.2M536.6 336.3L534.9 334.8M536.6 336.3L538.2 333.3M534.9 334.8L533.6 333.0M534.9 334.8L538.2 333.3M533.6 333.0L532.3 331.2M533.6 333.0L538.2 333.3M533.6 333.0L534.3 328.8M532.3 331.2L530.9 329.4M532.3 331.2L534.3 328.8M530.9 329.4L529.6 327.6M530.9 329.4L534.3 328.8M530.9 329.4L531.8 325.5M529.6 327.6L528.2 325.8M529.6 327.6L531.8 325.5M528.2 325.8L527.6 323.7M528.2 325.8L531.8 325.5M527.6 323.7L527.2 321.5M527.6 323.7L530.1 318.8M527.6 323.7L531.8 325.5M527.2 321.5L526.9 319.3M527.2 321.5L530.1 318.8M526.9 319.3L526.5 317.1M526.9 319.3L530.1 318.8M526.5 317.1L526.1 314.9M526.5 317.1L530.1 318.8M526.1 314.9L525.8 312.7M526.1 314.9L530.1 318.8M526.1 314.9L531.5 311.7M525.8 312.7L525.4 310.5M525.8 312.7L531.5 311.7M525.4 310.5L525.7 308.3M525.4 310.5L531.5 311.7M525.7 308.3L526.3 306.1M525.7 308.3L528.9 295.3M525.7 308.3L530.0 290.9M525.7 308.3L531.5 311.7M525.7 308.3L533.1 306.8M526.3 306.1L526.8 304.0M526.3 306.1L528.9 295.3M526.3 306.1L533.1 306.8M526.8 304.0L527.3 301.8M526.8 304.0L528.9 295.3M526.8 304.0L533.1 306.8M527.3 301.8L527.9 299.6M527.3 301.8L528.9 295.3M527.3 301.8L534.0 301.0M527.3 301.8L533.1 306.8M527.9 299.6L528.4 297.4M527.9 299.6L528.9 295.3M527.9 299.6L534.0 301.0M527.9 299.6L531.8 298.0M528.4 297.4L528.9 295.3M528.4 297.4L531.8 298.0M528.9 295.3L529.5 293.1M528.9 295.3L530.0 290.9M528.9 295.3L531.8 298.0M529.5 293.1L530.0 290.9M529.5 293.1L531.8 298.0M529.5 293.1L532.9 290.4M530.0 290.9L530.6 288.8M530.0 290.9L532.9 290.4M530.6 288.8L531.5 286.7M530.6 288.8L532.5 284.7M530.6 288.8L533.4 282.6M530.6 288.8L534.3 280.6M530.6 288.8L535.2 278.5M530.6 288.8L536.1 276.5M530.6 288.8L537.0 274.4M530.6 288.8L537.9 272.4M530.6 288.8L538.8 270.3M530.6 288.8L532.9 290.4M531.5 286.7L532.5 284.7M531.5 286.7L532.9 290.4M531.5 286.7L534.5 286.7M532.5 284.7L533.4 282.6M532.5 284.7L534.5 286.7M533.4 282.6L534.3 280.6M533.4 282.6L539.3 282.1M533.4 282.6L534.5 286.7M534.3 280.6L535.2 278.5M534.3 280.6L539.3 282.1M535.2 278.5L536.1 276.5M535.2 278.5L539.3 282.1M536.1 276.5L537.0 274.4M536.1 276.5L539.3 282.1M536.1 276.5L544.0 278.1M537.0 274.4L537.9 272.4M537.0 274.4L544.0 278.1M537.9 272.4L538.8 270.3M537.9 272.4L544.0 278.1M538.8 270.3L539.8 268.3M538.8 270.3L546.9 270.0M538.8 270.3L544.0 278.1M539.8 268.3L540.9 266.3M539.8 268.3L550.6 248.7M539.8 268.3L543.9 265.8M539.8 268.3L546.9 270.0M540.9 266.3L541.9 264.4M540.9 266.3L550.6 248.7M540.9 266.3L543.9 265.8M541.9 264.4L543.0 262.4M541.9 264.4L550.6 248.7M541.9 264.4L543.9 265.8M543.0 262.4L544.1 260.5M543.0 262.4L550.6 248.7M543.0 262.4L543.9 265.8M543.0 262.4L550.3 264.7M544.1 260.5L545.2 258.5M544.1 260.5L550.6 248.7M544.1 260.5L550.3 264.7M545.2 258.5L546.3 256.5M545.2 258.5L550.6 248.7M545.2 258.5L551.8 258.8M545.2 258.5L550.3 264.7M546.3 256.5L547.4 254.6M546.3 256.5L550.6 248.7M546.3 256.5L551.8 258.8M547.4 254.6L548.4 252.6M547.4 254.6L550.6 248.7M547.4 254.6L551.8 258.8M548.4 252.6L549.5 250.7M548.4 252.6L550.6 248.7M548.4 252.6L551.8 258.8M548.4 252.6L553.8 249.3M549.5 250.7L550.6 248.7M549.5 250.7L553.8 249.3M550.6 248.7L551.7 246.8M550.6 248.7L553.8 249.3M551.7 246.8L552.9 244.8M551.7 246.8L557.4 237.1M551.7 246.8L559.7 233.2M551.7 246.8L553.8 249.3M551.7 246.8L554.1 246.8M552.9 244.8L554.0 242.9M552.9 244.8L557.4 237.1M552.9 244.8L556.3 245.1M552.9 244.8L554.1 246.8M554.0 242.9L555.1 241.0M554.0 242.9L557.4 237.1M554.0 242.9L556.3 245.1M555.1 241.0L556.3 239.0M555.1 241.0L557.4 237.1M555.1 241.0L562.6 243.4M555.1 241.0L556.3 245.1M556.3 239.0L557.4 237.1M556.3 239.0L562.6 243.4M557.4 237.1L558.5 235.2M557.4 237.1L559.7 233.2M557.4 237.1L562.6 243.4M557.4 237.1L564.5 237.0M557.4 237.1L562.2 235.3M558.5 235.2L559.7 233.2M558.5 235.2L562.2 235.3M559.7 233.2L561.1 231.5M559.7 233.2L562.2 235.3M561.1 231.5L562.5 229.8M561.1 231.5L562.2 235.3M562.5 229.8L564.0 228.1M562.5 229.8L567.4 228.5M562.5 229.8L564.5 237.0M562.5 229.8L562.2 235.3M564.0 228.1L565.5 226.5M564.0 228.1L567.4 228.5M565.5 226.5L567.0 224.8M565.5 226.5L567.4 228.5M567.0 224.8L568.5 223.2M567.0 224.8L573.7 226.1M567.0 224.8L567.4 228.5M568.5 223.2L570.5 222.0M568.5 223.2L573.7 226.1M570.5 222.0L572.4 220.9M570.5 222.0L573.7 226.1M572.4 220.9L574.3 219.7M572.4 220.9L573.7 226.1M574.3 219.7L576.2 218.6M574.3 219.7L573.7 226.1M576.2 218.6L578.3 217.7M576.2 218.6L573.7 226.1M576.2 218.6L582.6 226.1M578.3 217.7L580.4 216.9M578.3 217.7L582.6 226.1M580.4 216.9L582.5 213.9M580.4 216.9L582.6 226.1M580.4 216.9L588.0 215.2M582.5 213.9L581.9 211.7M582.5 213.9L583.0 210.7M582.5 213.9L585.2 210.5M582.5 213.9L588.0 215.2M581.9 211.7L583.0 210.7M583.0 210.7L585.2 210.5M585.2 210.5L590.0 210.0M585.2 210.5L588.0 215.2M590.0 210.0L593.6 201.2M590.0 210.0L597.0 217.4M590.0 210.0L606.6 210.1M590.0 210.0L588.0 215.2M593.6 201.2L594.0 189.2M593.6 201.2L608.6 193.0M593.6 201.2L606.6 210.1M594.0 189.2L600.1 179.8M594.0 189.2L608.6 193.0M600.1 179.8L610.3 173.5M600.1 179.8L608.6 193.0M610.3 173.5L621.0 168.2M610.3 173.5L621.1 190.0M610.3 173.5L608.6 193.0M621.0 168.2L621.1 190.0M621.0 168.2L633.4 185.9M567.3 278.6L556.3 275.3M567.3 278.6L575.6 281.8M567.3 278.6L566.5 266.1M567.3 278.6L569.6 289.9M567.3 278.6L579.0 273.7M567.3 278.6L574.1 269.0M567.3 278.6L559.6 294.0M567.3 278.6L551.2 284.5M629.3 227.9L634.7 217.5M629.3 227.9L608.4 229.5M629.3 227.9L615.0 240.8M629.3 227.9L643.5 224.7M629.3 227.9L614.9 219.2M629.3 227.9L630.9 237.6M597.0 217.4L608.4 229.5M597.0 217.4L596.1 235.0M597.0 217.4L614.9 219.2M597.0 217.4L606.6 210.1M597.0 217.4L582.6 226.1M597.0 217.4L588.0 215.2M541.9 304.2L555.1 307.3M541.9 304.2L545.8 294.0M541.9 304.2L545.0 314.3M541.9 304.2L534.0 301.0M541.9 304.2L533.1 306.8M568.7 326.4L575.4 333.7M568.7 326.4L559.6 334.7M568.7 326.4L561.6 317.4M568.7 326.4L574.5 317.1M568.7 326.4L574.3 326.7M555.1 307.3L545.8 294.0M555.1 307.3L568.8 301.6M555.1 307.3L545.0 314.3M555.1 307.3L561.6 317.4M555.1 307.3L559.6 294.0M551.8 258.8L566.5 266.1M551.8 258.8L557.8 251.4M551.8 258.8L553.8 249.3M551.8 258.8L550.3 264.7M573.7 226.1L567.4 228.5M573.7 226.1L580.8 232.5M573.7 226.1L582.6 226.1M594.5 359.6L595.6 339.3M573.2 253.1L566.5 266.1M573.2 253.1L583.7 254.7M573.2 253.1L573.2 242.1M573.2 253.1L557.8 251.4M573.2 253.1L562.6 243.4M573.2 253.1L576.8 246.6M573.2 253.1L576.6 258.3M545.8 294.0L559.6 294.0M545.8 294.0L538.4 287.0M545.8 294.0L551.2 284.5M545.8 294.0L534.0 301.0M545.8 294.0L531.8 298.0M545.8 294.0L532.9 290.4M580.6 298.0L593.8 314.7M580.6 298.0L585.9 283.6M580.6 298.0L575.6 293.4M580.6 298.0L575.9 302.0M580.6 298.0L594.1 299.3M621.1 190.0L608.6 193.0M621.1 190.0L632.7 204.8M621.1 190.0L619.4 207.3M621.1 190.0L633.4 185.9M579.5 320.5L593.8 314.7M579.5 320.5L573.8 311.2M579.5 320.5L574.5 317.1M579.5 320.5L590.3 326.3M579.5 320.5L574.3 326.7M579.5 320.5L579.7 328.6M733.9 211.8L729.2 209.9M733.9 211.8L733.1 218.2M733.9 211.8L738.4 212.8M733.9 211.8L736.0 214.5M733.9 211.8L729.2 212.8M634.7 217.5L643.5 224.7M634.7 217.5L632.7 204.8M634.7 217.5L614.9 219.2M634.7 217.5L619.4 207.3M593.8 314.7L573.8 311.2M593.8 314.7L590.3 326.3M593.8 314.7L575.9 302.0M593.8 314.7L594.1 299.3M556.3 275.3L566.5 266.1M556.3 275.3L551.2 284.5M556.3 275.3L546.9 270.0M556.3 275.3L550.3 264.7M556.3 275.3L544.0 278.1M595.6 339.3L590.3 326.3M595.6 339.3L579.7 328.6M714.0 219.0L720.1 218.0M714.0 219.0L713.2 212.7M714.0 219.0L718.2 225.8M714.0 219.0L713.7 223.9M714.0 219.0L710.6 216.5M714.0 219.0L710.5 221.9M587.2 242.6L596.2 250.3M587.2 242.6L583.7 254.7M587.2 242.6L596.1 235.0M587.2 242.6L580.8 232.5M587.2 242.6L580.2 238.6M587.2 242.6L576.8 246.6M587.2 242.6L602.4 242.5M575.6 281.8L569.6 289.9M575.6 281.8L585.9 283.6M575.6 281.8L579.0 273.7M575.6 281.8L574.9 287.9M596.2 250.3L583.7 254.7M596.2 250.3L602.4 242.5M596.2 250.3L593.6 261.0M586.5 270.2L599.6 268.9M586.5 270.2L583.7 254.7M586.5 270.2L596.2 286.5M586.5 270.2L585.9 283.6M586.5 270.2L579.0 273.7M586.5 270.2L578.2 265.1M586.5 270.2L593.6 261.0M568.8 301.6L573.8 311.2M568.8 301.6L569.6 289.9M568.8 301.6L575.6 293.4M568.8 301.6L561.6 317.4M568.8 301.6L559.6 294.0M568.8 301.6L575.9 302.0M549.2 326.2L545.0 314.3M549.2 326.2L559.6 334.7M549.2 326.2L561.6 317.4M549.2 326.2L543.2 333.2M549.2 326.2L552.9 338.2M549.2 326.2L538.1 325.6M720.1 218.0L713.2 212.7M720.1 218.0L721.5 211.9M720.1 218.0L725.1 214.9M720.1 218.0L718.2 225.8M720.1 218.0L722.1 220.9M599.6 268.9L596.2 286.5M599.6 268.9L593.6 261.0M566.5 266.1L557.8 251.4M566.5 266.1L574.1 269.0M566.5 266.1L550.3 264.7M566.5 266.1L576.6 258.3M583.7 254.7L576.8 246.6M583.7 254.7L578.2 265.1M583.7 254.7L593.6 261.0M583.7 254.7L576.6 258.3M608.4 229.5L615.0 240.8M608.4 229.5L596.1 235.0M608.4 229.5L614.9 219.2M608.4 229.5L602.4 242.5M545.0 314.3L561.6 317.4M545.0 314.3L533.3 319.1M545.0 314.3L531.5 311.7M545.0 314.3L533.1 306.8M545.0 314.3L538.1 325.6M573.2 242.1L567.4 228.5M573.2 242.1L580.8 232.5M573.2 242.1L562.6 243.4M573.2 242.1L580.2 238.6M573.2 242.1L576.8 246.6M573.2 242.1L564.5 237.0M573.8 311.2L561.6 317.4M573.8 311.2L574.5 317.1M573.8 311.2L575.9 302.0M608.6 193.0L606.6 210.1M608.6 193.0L619.4 207.3M569.6 289.9L575.6 293.4M569.6 289.9L559.6 294.0M569.6 289.9L574.9 287.9M575.4 333.7L559.6 334.7M575.4 333.7L574.3 326.7M575.4 333.7L579.7 328.6M615.0 240.8L630.9 237.6M615.0 240.8L602.4 242.5M567.4 228.5L580.8 232.5M567.4 228.5L564.5 237.0M596.2 286.5L585.9 283.6M596.2 286.5L594.1 299.3M585.9 283.6L579.0 273.7M585.9 283.6L575.6 293.4M585.9 283.6L594.1 299.3M585.9 283.6L574.9 287.9M559.6 334.7L561.6 317.4M559.6 334.7L552.9 338.2M713.2 212.7L707.1 212.4M713.2 212.7L714.2 207.8M713.2 212.7L721.5 211.9M713.2 212.7L710.6 216.5M713.2 212.7L710.0 208.6M713.2 212.7L719.2 208.3M596.1 235.0L580.8 232.5M596.1 235.0L582.6 226.1M596.1 235.0L602.4 242.5M707.1 212.4L703.6 214.9M707.1 212.4L710.6 216.5M707.1 212.4L710.0 208.6M714.2 207.8L710.0 208.6M714.2 207.8L719.2 208.3M557.8 251.4L553.8 249.3M557.8 251.4L562.6 243.4M557.8 251.4L556.3 245.1M557.8 251.4L554.1 246.8M643.5 224.7L653.6 228.2M643.5 224.7L630.9 237.6M547.7 339.5L543.2 333.2M547.7 339.5L545.0 338.7M547.7 339.5L552.9 338.2M580.8 232.5L582.6 226.1M580.8 232.5L580.2 238.6M729.2 209.9L726.0 210.1M729.2 209.9L729.2 212.8M632.7 204.8L642.1 194.9M632.7 204.8L619.4 207.3M632.7 204.8L633.4 185.9M579.0 273.7L574.1 269.0M579.0 273.7L578.2 265.1M575.6 293.4L575.9 302.0M575.6 293.4L574.9 287.9M705.3 219.2L702.1 221.1M705.3 219.2L703.6 214.9M705.3 219.2L705.8 224.3M705.3 219.2L710.6 216.5M705.3 219.2L710.5 221.9M561.6 317.4L574.5 317.1M574.1 269.0L578.2 265.1M574.1 269.0L576.6 258.3M721.5 211.9L725.1 214.9M721.5 211.9L723.2 209.7M721.5 211.9L719.2 208.3M721.5 211.9L726.0 210.1M614.9 219.2L606.6 210.1M614.9 219.2L619.4 207.3M574.5 317.1L574.3 326.7M559.6 294.0L551.2 284.5M642.1 194.9L633.4 185.9M553.8 249.3L554.1 246.8M590.3 326.3L579.7 328.6M737.6 222.1L733.1 218.2M737.6 222.1L738.6 218.7M737.6 222.1L741.6 220.7M737.6 222.1L732.4 224.0M538.4 287.0L539.3 282.1M538.4 287.0L551.2 284.5M538.4 287.0L532.9 290.4M538.4 287.0L534.5 286.7M606.6 210.1L619.4 207.3M728.9 222.1L733.1 218.2M728.9 222.1L728.2 218.5M728.9 222.1L732.4 224.0M728.9 222.1L728.2 226.4M728.9 222.1L725.4 222.6M702.1 221.1L703.6 214.9M702.1 221.1L705.8 224.3M539.3 282.1L551.2 284.5M539.3 282.1L544.0 278.1M539.3 282.1L534.5 286.7M582.6 226.1L588.0 215.2M538.2 333.3L543.2 333.2M538.2 333.3L534.3 328.8M538.2 333.3L538.1 325.6M538.2 333.3L542.2 336.2M562.6 243.4L564.5 237.0M562.6 243.4L556.3 245.1M533.3 319.1L530.1 318.8M533.3 319.1L531.5 311.7M533.3 319.1L538.1 325.6M533.3 319.1L531.8 325.5M703.6 214.9L710.6 216.5M543.2 333.2L545.0 338.7M543.2 333.2L552.9 338.2M543.2 333.2L538.1 325.6M543.2 333.2L542.2 336.2M733.1 218.2L728.2 218.5M733.1 218.2L738.6 218.7M733.1 218.2L736.0 214.5M733.1 218.2L732.4 224.0M733.1 218.2L729.2 212.8M580.2 238.6L576.8 246.6M725.1 214.9L728.2 218.5M725.1 214.9L726.0 210.1M725.1 214.9L722.1 220.9M725.1 214.9L729.2 212.8M530.1 318.8L531.5 311.7M530.1 318.8L531.8 325.5M738.4 212.8L736.0 214.5M738.4 212.8L739.6 216.0M705.8 224.3L710.5 221.9M574.3 326.7L579.7 328.6M551.2 284.5L544.0 278.1M534.0 301.0L531.8 298.0M534.0 301.0L533.1 306.8M564.5 237.0L562.2 235.3M531.8 298.0L532.9 290.4M545.0 338.7L542.2 336.2M722.1 226.5L718.2 225.8M722.1 226.5L725.0 225.5M722.1 226.5L722.1 220.9M718.2 225.8L713.7 223.9M718.2 225.8L722.1 220.9M543.9 265.8L546.9 270.0M543.9 265.8L550.3 264.7M728.2 218.5L722.1 220.9M728.2 218.5L729.2 212.8M728.2 218.5L725.4 222.6M713.7 223.9L710.5 221.9M531.5 311.7L533.1 306.8M578.2 265.1L576.6 258.3M725.0 225.5L722.1 220.9M725.0 225.5L728.2 226.4M725.0 225.5L725.4 222.6M710.6 216.5L710.5 221.9M738.6 218.7L736.0 214.5M738.6 218.7L741.6 220.7M738.6 218.7L739.6 216.0M532.9 290.4L534.5 286.7M534.3 328.8L538.1 325.6M534.3 328.8L531.8 325.5M546.9 270.0L550.3 264.7M546.9 270.0L544.0 278.1M736.0 214.5L739.6 216.0M741.6 220.7L744.1 214.8M741.6 220.7L739.6 216.0M556.3 245.1L554.1 246.8M732.4 224.0L728.2 226.4M723.2 209.7L719.2 208.3M723.2 209.7L726.0 210.1M726.0 210.1L729.2 212.8M722.1 220.9L725.4 222.6M538.1 325.6L531.8 325.5M728.2 226.4L725.4 222.6M744.1 214.8L739.6 216.0" stroke="#d0d0d0" stroke-width="1" fill="none"/>
</svg>
<div id="overlay">
<div class="leg" style="top:49px;left:1px;color:#fff;letter-spacing:0.6px">X-Velocity</div>
<div class="leg" style="top:70.3px;left:4px;color:#ff0000;letter-spacing:-0.12px">2.052E+01</div>
<div class="leg" style="top:93.3px;left:4px;color:#ff3c00;letter-spacing:-0.12px">1.870E+01</div>
<div class="leg" style="top:116.4px;left:4px;color:#ff5000;letter-spacing:-0.12px">1.687E+01</div>
<div class="leg" style="top:139.4px;left:4px;color:#ff8200;letter-spacing:-0.12px">1.505E+01</div>
<div class="leg" style="top:162.4px;left:4px;color:#f0a000;letter-spacing:-0.12px">1.322E+01</div>
<div class="leg" style="top:185.5px;left:4px;color:#f0aa00;letter-spacing:-0.12px">1.140E+01</div>
<div class="leg" style="top:208.5px;left:4px;color:#b4e600;letter-spacing:-0.12px">9.575E+00</div>
<div class="leg" style="top:231.5px;left:4px;color:#f0c800;letter-spacing:-0.12px">7.751E+00</div>
<div class="leg" style="top:254.5px;left:4px;color:#aae600;letter-spacing:-0.12px">5.927E+00</div>
<div class="leg" style="top:277.6px;left:4px;color:#00f000;letter-spacing:-0.12px">4.103E+00</div>
<div class="leg" style="top:300.6px;left:4px;color:#28ff28;letter-spacing:-0.12px">2.278E+00</div>
<div class="leg" style="top:323.6px;left:4px;color:#32e6dc;letter-spacing:-0.12px">4.542E-01</div>
<div class="leg" style="top:346.7px;left:0px;color:#00aae6;letter-spacing:-0.12px">-1.370E+00</div>
<div class="leg" style="top:369.7px;left:0px;color:#006eff;letter-spacing:-0.12px">-3.194E+00</div>
<div class="leg" style="top:392.7px;left:0px;color:#0046ff;letter-spacing:-0.12px">-5.018E+00</div>
<div class="leg" style="top:415.8px;left:0px;color:#0000ff;letter-spacing:-0.12px">-6.843E+00</div>
<div class="leg" style="top:609px;left:236px;color:#fff;letter-spacing:0.72px;-webkit-text-stroke:0.25px #fff">No title has been set for this run.</div>
<div class="leg" style="top:47.5px;left:844px;color:#fff;letter-spacing:0.72px;-webkit-text-stroke:0.3px #fff">Probe value</div>
<div class="leg" style="top:64.3px;left:848.7px;color:#fff;letter-spacing:0.72px">-4.216E+00</div>
</div>
<div id="toolbar">
<div class="tbtn" style="left:0px"><svg width="21" height="37" viewBox="0 0 21 37" shape-rendering="crispEdges"><path d="M6.5 4.5H13.5L16.5 7.5V16.5H6.5Z" fill="none" stroke="#808080"/><path d="M13.5 4.5V7.5H16.5" fill="none" stroke="#808080"/><path d="M7.5 17.5H17.5V8.5" fill="none" stroke="#fff"/></svg></div>
<div class="tbtn" style="left:23px"><svg width="21" height="37" viewBox="0 0 21 37" shape-rendering="crispEdges"><path d="M4 8H8L9 9H14V11H18L14 16H4Z" fill="#808080"/><path d="M11.5 6.5C12.5 3.5 16 3 17.5 6M17.8 6.5V3.8M17.8 6.5H15.2" fill="none" stroke="#808080" shape-rendering="auto" stroke-width="1.1"/><path d="M5 17.5H15L19 12" fill="none" stroke="#fff"/></svg></div>
<div class="tbtn" style="left:46px"><svg width="21" height="37" viewBox="0 0 21 37" shape-rendering="crispEdges"><rect x="4" y="4" width="13" height="13" fill="#808080"/><rect x="7" y="5" width="7" height="5" fill="#c0c0c0"/><rect x="13" y="13" width="2" height="3" fill="#c0c0c0"/><rect x="15" y="5" width="1" height="1" fill="#c0c0c0"/><path d="M5 17.5H17.5V5" fill="none" stroke="#fff"/></svg></div>
<div class="tbtn" style="left:69px"><svg width="21" height="37" viewBox="0 0 21 37" shape-rendering="crispEdges"><path d="M7.5 4.5H15.5L13.5 9.5H5.5Z" fill="#fff" stroke="#000"/><path d="M8 6.5H13M7.5 7.5H12.5" stroke="#000"/><path d="M14.5 10.5L17.5 8.5V13.5L14.5 16.5Z" fill="#808080" stroke="#000"/><path d="M3.5 10.5H14.5V16.5H3.5Z" fill="#c0c0c0" stroke="#000"/><path d="M3.5 12.5H14.5M4 14.5H14" stroke="#000"/><path d="M4 11.5H14" stroke="#fff"/><rect x="9" y="13" width="3" height="1" fill="#e6c800"/></svg></div>
<div class="tfield" style="left:250px;width:79px"><span class="g">B1</span></div>
<div class="tfield" style="left:351px;width:148px"><span class="g">BLOCKAGE</span></div>
</div>
<div id="status"><div class="inner"><span class="g">Ready</span></div></div>
<div id="panel">
<div class="pb in" style="left:12px;top:4px"><svg viewBox="0 0 16 16" shape-rendering="crispEdges"><path d="M7.5 2V9M7 8.5H13M7.5 9L2.5 13.5" stroke="#000" fill="none"/><text x="2" y="5.5" font-family="Liberation Sans,sans-serif" font-weight="bold" font-size="6" fill="#000" style="filter:url(#thr)">z</text><text x="10" y="5.5" font-family="Liberation Sans,sans-serif" font-weight="bold" font-size="6" fill="#000" style="filter:url(#thr)">y</text><text x="6" y="13.5" font-family="Liberation Sans,sans-serif" font-weight="bold" font-size="6" fill="#000" style="filter:url(#thr)">x</text></svg></div>
<div class="pb" style="left:42px;top:4px"><svg viewBox="0 0 16 16" shape-rendering="crispEdges"><ellipse cx="7.8" cy="10.2" rx="2.6" ry="1.5" fill="#00dcff" shape-rendering="auto"/><path d="M6 11.9H9.6" stroke="#000" stroke-width="0.8" shape-rendering="auto"/><path d="M7.8 2V4M7.4 3.5L3.3 10.5V12.6M8.2 3.5L12.3 10.5V12.6" stroke="#000" fill="none" shape-rendering="auto" stroke-width="1.5"/></svg></div>
<div class="pb" style="left:72px;top:4px"><svg viewBox="0 0 16 16" shape-rendering="crispEdges"><path d="M3.5 2V13M6.5 2V13M9.5 2V13M12.5 2V13M2 5.5H13.5M2 8.5H13.5M2 12.5H13.5" stroke="#000" fill="none"/></svg></div>
<div class="pb" style="left:102px;top:4px"><svg viewBox="0 0 16 16" shape-rendering="crispEdges"><path d="M5.5 2.5H9.5V5.5H10.5V9.5H12.5V12.5H3.5V9.5H4.5V5.5H5.5ZM4.5 9.5H10.5M5.5 5.5H9.5" stroke="#000" fill="none"/></svg></div>
<div class="pb" style="left:12px;top:34px"><svg viewBox="0 0 16 16" shape-rendering="crispEdges"><rect x="5.5" y="5.5" width="8" height="8" stroke="#000" fill="none"/><rect x="5.5" y="5.5" width="8" height="8" stroke="#000" fill="none" stroke-width="1.3" shape-rendering="auto"/><path d="M1 1.5H2M3 1.5H4M1 3.5H2M3 3.5H4" stroke="#000"/></svg></div>
<div class="pb" style="left:102px;top:34px"><svg viewBox="0 0 16 16" shape-rendering="crispEdges"><rect x="2.5" y="2.5" width="11" height="10" stroke="#000" fill="none"/><rect x="2.5" y="2.5" width="11" height="10" stroke="#000" fill="none" stroke-width="1.3" shape-rendering="auto"/></svg></div>
<div class="pb in" style="left:12px;top:74px"><svg viewBox="0 0 16 16" shape-rendering="crispEdges"><polygon points="5,6 10.5,2 10.5,9 5,13" fill="#ff0000" stroke="#000" stroke-width="1.2" shape-rendering="auto"/></svg></div>
<div class="pb" style="left:42px;top:74px"><svg viewBox="0 0 16 16" shape-rendering="crispEdges"><g stroke="#000" fill="none" shape-rendering="auto" stroke-width="1"><circle cx="9.4" cy="4.2" r="1.3"/><path d="M8.6 5.2L6.8 7.8"/><circle cx="6" cy="8.8" r="1.5"/><path d="M5 10.2L3.8 11.6L5 13L6.2 11.6Z"/></g></svg></div>
<div class="pb" style="left:72px;top:74px"><svg viewBox="0 0 16 16" shape-rendering="crispEdges"><path d="M0.5 5H11.5V13.5H0.5ZM0.5 5L3.5 1.5H14.5L11.5 5M14.5 1.5V10L11.5 13.5" stroke="#000" fill="none" shape-rendering="auto"/><path d="M10.3 1L6.6 5.4V13.5" stroke="#ff0000" fill="none" shape-rendering="auto"/></svg></div>
<div class="pb in" style="left:102px;top:74px"><svg viewBox="0 0 16 16" shape-rendering="crispEdges"><path d="M3.5 6H8.5V11.5H3.5ZM3.5 6L6.5 3.5H12L8.5 6M12 3.5V8.5L8.5 11.5" stroke="#000" fill="none" shape-rendering="auto"/><path d="M9 3.5L5.8 6V11.5" stroke="#ff0000" fill="none" shape-rendering="auto"/></svg></div>
<div class="pb" style="left:12px;top:104px"><svg viewBox="0 0 16 16" shape-rendering="crispEdges"><path d="M4 11.5L10.5 5" stroke="#000" stroke-width="1.3" shape-rendering="auto"/><polygon points="7,4 12,4 12,9" fill="#000" shape-rendering="auto"/></svg></div>
<div class="pb" style="left:42px;top:104px"><svg viewBox="0 0 16 16" shape-rendering="crispEdges"><g stroke="#000" fill="none" shape-rendering="auto" stroke-width="1"><circle cx="9.4" cy="4.2" r="1.3"/><path d="M8.6 5.2L6.8 7.8"/><circle cx="6" cy="8.8" r="1.5"/><path d="M5 10.2L3.8 11.6L5 13L6.2 11.6Z"/></g><path d="M0 0L16 16M16 0L0 16" stroke="#ff0000" shape-rendering="auto"/></svg></div>
<div class="pb" style="left:72px;top:104px"><svg viewBox="0 0 16 16" shape-rendering="crispEdges"><path d="M0.5 5H11.5V13.5H0.5ZM0.5 5L3.5 1.5H14.5L11.5 5M14.5 1.5V10L11.5 13.5" stroke="#000" fill="none" shape-rendering="auto"/><path d="M6.5 4V14" stroke="#ff0000"/><path d="M0 0L16 16M16 0L0 16" stroke="#ff0000" shape-rendering="auto"/></svg></div>
<div class="pb in" style="left:102px;top:104px"><svg viewBox="0 0 16 16" shape-rendering="crispEdges"><rect x="3" y="3" width="6" height="2" fill="#ff0000"/><rect x="3" y="6" width="6" height="2" fill="#00ff00"/><rect x="3" y="9" width="6" height="2" fill="#00708c"/><rect x="9" y="3" width="3" height="2" fill="#000"/><rect x="9" y="6" width="3" height="2" fill="#000"/><rect x="9" y="9" width="3" height="2" fill="#000"/></svg></div>
<div class="pb" style="left:12px;top:134px"><svg viewBox="0 0 16 16" shape-rendering="crispEdges"><g shape-rendering="auto"><path d="M4.2 10.2L10.8 5.6" stroke="#000" stroke-width="5.2" stroke-linecap="round"/><path d="M4.2 10.2L10.8 5.6" stroke="#c0c0c0" stroke-width="3" stroke-linecap="round"/><path d="M4.5 8L6.5 11.5M6.5 6.8L8.5 10.2M8.5 5.5L10.5 9M10.5 4L12 7.2M11 4.5L12.5 2.5" stroke="#000" stroke-width="1"/></g></svg></div>
<div class="pb" style="left:42px;top:134px"><b><span class="g">X</span></b></div>
<div class="pb" style="left:72px;top:134px"><b><span class="g">Y</span></b></div>
<div class="pb in" style="left:102px;top:134px"><b><span class="g">Z</span></b></div>
<div class="pb" style="left:12px;top:164px"><b><span class="g">P</span></b></div>
<div class="pb" style="left:42px;top:164px"><b><span class="g">T</span></b></div>
<div class="pb" style="left:72px;top:164px"><b><span class="g">V</span></b></div>
<div class="pb in" style="left:102px;top:164px"><b><span class="g">C</span></b></div>
<div class="sb" style="left:17px;top:204px;width:20px"><svg viewBox="0 0 18 18" shape-rendering="auto"><path d="M4.5 13L11 6.5" stroke="#000" stroke-width="3" fill="none"/><polygon points="6.5,4 14.5,4 14.5,12" fill="#000"/></svg></div>
<div class="sb" style="left:37px;top:204px;width:20px"><svg viewBox="0 0 18 18" shape-rendering="auto"><path d="M13 5L7 11.5" stroke="#000" stroke-width="3" fill="none"/><polygon points="3.5,6 3.5,14 11.5,14" fill="#000"/></svg></div>
<div class="sb rs" style="left:72px;top:204px;width:50px"><span class="g">Reset</span></div>
<div class="sb" style="left:17px;top:234px;width:20px"><svg viewBox="0 0 18 18" shape-rendering="auto"><path d="M14 2.5V10H6" stroke="#000" stroke-width="3" fill="none"/><polygon points="1,10 7,5 7,15" fill="#000"/></svg></div>
<div class="sb" style="left:37px;top:234px;width:20px"><svg viewBox="0 0 18 18" shape-rendering="auto"><path d="M3.5 2.5V10H11" stroke="#000" stroke-width="3" fill="none"/><polygon points="16.5,10 10.5,5 10.5,15" fill="#000"/></svg></div>
<div class="sb" style="left:87px;top:234px;width:20px"><svg viewBox="0 0 18 18" shape-rendering="auto"><path d="M14 13.5H7V7" stroke="#000" stroke-width="3" fill="none"/><polygon points="7,1.5 2.5,7.5 11.5,7.5" fill="#000"/></svg></div>
<div class="sb" style="left:17px;top:264px;width:20px"><svg viewBox="0 0 18 18" shape-rendering="auto"><path d="M3 4L11 12.5L16 8" stroke="#000" stroke-width="2.6" fill="none"/><polygon points="1,2 8.5,2 1,9.5" fill="#000"/></svg></div>
<div class="sb" style="left:37px;top:264px;width:20px"><svg viewBox="0 0 18 18" shape-rendering="auto"><path d="M1 9L5 12.5L13 4" stroke="#000" stroke-width="2.6" fill="none"/><polygon points="16,2 8.5,2 16,9.5" fill="#000"/></svg></div>
<div class="sb" style="left:87px;top:264px;width:20px"><svg viewBox="0 0 18 18" shape-rendering="auto"><path d="M14 3.5H7V11" stroke="#000" stroke-width="3" fill="none"/><polygon points="7,16.5 2.5,10.5 11.5,10.5" fill="#000"/></svg></div>
<div class="ptxt" style="left:23px;top:305.5px;letter-spacing:0.75px">Probe position</div>
<div class="ptxt" style="left:7px;top:326px">X</div>
<div class="pf" style="left:22px;top:324px"><span class="g">0<i>.</i>540000</span></div>
<div class="ab" style="left:93px;top:324px"><svg viewBox="0 0 16 17"><polygon points="5,8.5 10,4.5 10,12.5" fill="#303030"/></svg></div>
<div class="ab" style="left:113px;top:324px"><svg viewBox="0 0 16 17"><polygon points="11,8.5 6,4.5 6,12.5" fill="#000"/><path d="M6.5 12.5L11 9" stroke="#fff" stroke-width="0.8"/></svg></div>
<div class="ptxt" style="left:7px;top:351px">Y</div>
<div class="pf" style="left:22px;top:349px"><span class="g">0<i>.</i>240000</span></div>
<div class="ab" style="left:93px;top:349px"><svg viewBox="0 0 16 17"><polygon points="5,8.5 10,4.5 10,12.5" fill="#303030"/></svg></div>
<div class="ab" style="left:113px;top:349px"><svg viewBox="0 0 16 17"><polygon points="11,8.5 6,4.5 6,12.5" fill="#000"/><path d="M6.5 12.5L11 9" stroke="#fff" stroke-width="0.8"/></svg></div>
<div class="ptxt" style="left:7px;top:376px">Z</div>
<div class="pf" style="left:22px;top:374px"><span class="g">0<i>.</i>523333</span></div>
<div class="ab" style="left:93px;top:374px"><svg viewBox="0 0 16 17"><polygon points="5,8.5 10,4.5 10,12.5" fill="#303030"/></svg></div>
<div class="ab" style="left:113px;top:374px"><svg viewBox="0 0 16 17"><polygon points="11,8.5 6,4.5 6,12.5" fill="#000"/><path d="M6.5 12.5L11 9" stroke="#fff" stroke-width="0.8"/></svg></div>
</div>
</div>
</body>
</html>
